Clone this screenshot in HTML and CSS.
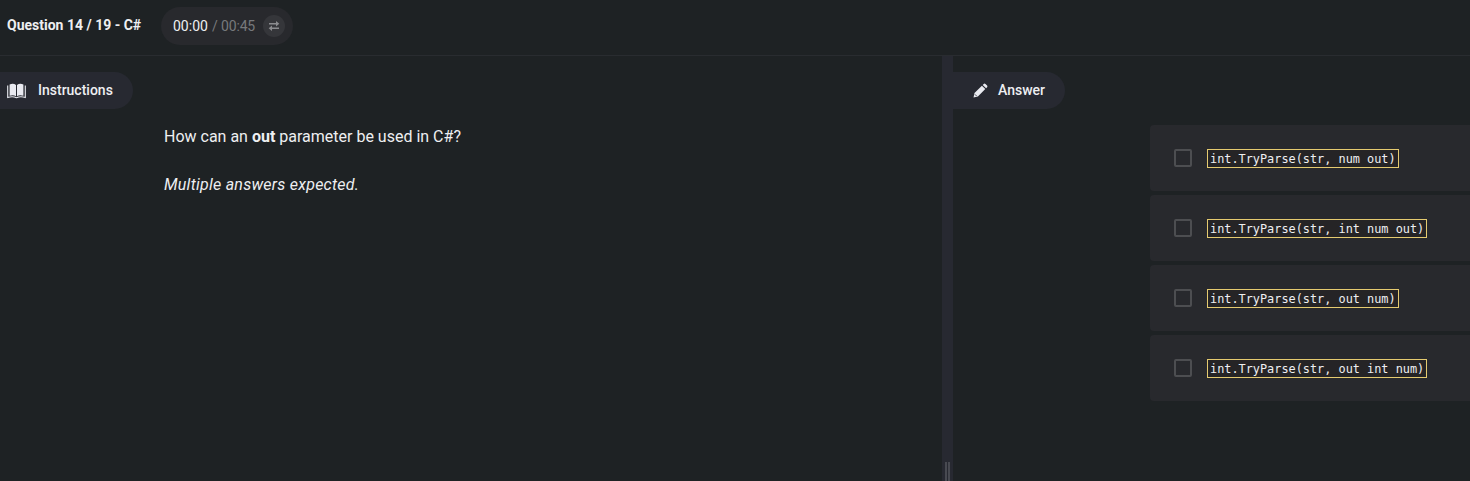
FILE: index.html
```html
<!DOCTYPE html>
<html lang="en">
<head>
<meta charset="utf-8">
<title>Question 14 / 19 - C#</title>
<link rel="stylesheet" href="styles.css">
</head>
<body>
<header class="topbar">
  <h1 class="title">Question 14 / 19 - C#</h1>
  <div class="timer">
    <span class="elapsed">00:00</span><span class="total">/ 00:45</span>
    <span class="swap"><svg width="12" height="12" viewBox="0 0 12 12"><path d="M1 3.7h8M3 8.3h8" stroke="currentColor" stroke-width="1.5"/><path d="M8 1l3.3 2.7L8 6.4zM4 5.6L.7 8.3 4 11z" fill="currentColor"/></svg></span>
  </div>
</header>
<main class="panes">
  <section class="pane">
    <h2 class="tab tab-instructions">
      <svg class="book" width="19" height="16" viewBox="0 0 19 16"><path d="M2.6 1.5C5 .3 7.2.5 9 2v11.2c-1.800-1.200-4-1.300-6.400-.4zM16.400 1.500C14 .3 11.800.5 10 2v11.200c1.800-1.200 4-1.300 6.400-.4z" fill="currentColor"/><path d="M.7 2.500v12c3.300-1 6.200-.9 8.800.2 2.600-1.100 5.500-1.200 8.800-.2v-12" fill="none" stroke="currentColor" stroke-width="1.100"/></svg>
      Instructions
    </h2>
    <div class="prompt">
      <p>How can an <strong>out</strong> parameter be used in C#?</p>
      <p><em>Multiple answers expected.</em></p>
    </div>
  </section>
  <div class="splitter"><span class="grip"></span></div>
  <section class="pane-answer">
    <h2 class="tab tab-answer">
      <svg class="pencil" width="15" height="15" viewBox="0 0 15 15"><path d="M.5 14.500l1-4.400L8.900 2.700l3.400 3.400-7.400 7.400zM9.700 1.900l1-1q.9-.7 1.800 0l1.600 1.600q.7.9 0 1.800l-1 1z" fill="currentColor"/><path d="M1.900 11.300l1.800 1.800" stroke="#272931" stroke-width=".8"/></svg>
      Answer
    </h2>
    <div class="options">
      <label class="option"><span class="check"></span><code>int.TryParse(str, num out)</code></label>
      <label class="option"><span class="check"></span><code>int.TryParse(str, int num out)</code></label>
      <label class="option"><span class="check"></span><code>int.TryParse(str, out num)</code></label>
      <label class="option"><span class="check"></span><code>int.TryParse(str, out int num)</code></label>
    </div>
  </section>
</main>
</body>
</html>
```
FILE: styles.css
```css
* { box-sizing: border-box; }
body {
  margin: 0;
  height: 481px;
  display: flex;
  flex-direction: column;
  overflow: hidden;
  background: #1e2224;
  color: #eeeff1;
  font-family: Roboto, sans-serif;
}
.topbar {
  display: flex;
  align-items: flex-start;
  height: 56px;
  padding: 7px 0 0 7px;
  border-bottom: 1px solid #292c30;
}
.title { margin: 0; width: 154px; font-size: 14px; font-weight: 700; line-height: 37px; white-space: nowrap; }
.timer {
  display: flex;
  align-items: center;
  width: 132px;
  height: 38px;
  padding-left: 12px;
  border-radius: 19px;
  background: #28292d;
  font-size: 14px;
}
.elapsed { width: 39px; }
.total { width: 51px; color: #77797c; letter-spacing: -0.15px; white-space: nowrap; }
.swap {
  display: flex;
  align-items: center;
  justify-content: center;
  width: 22px;
  height: 22px;
  border-radius: 50%;
  background: #35363a;
  color: #8b8c8f;
}
.panes { display: flex; flex: 1; }
.pane { width: 942px; padding-top: 16px; }
.pane-answer { flex: 1; padding-top: 16px; }
.tab {
  display: flex;
  align-items: center;
  height: 37px;
  margin: 0;
  padding-bottom: 2px;
  border-radius: 0 19px 19px 0;
  background: #272931;
  font-size: 14px;
  font-weight: 500;
}
.tab-instructions { width: 133px; padding-left: 7px; gap: 12px; }
.tab-answer { width: 112px; padding-left: 20px; gap: 10px; }
.book, .pencil { margin-top: 2px; color: #e9eaf0; }
.prompt { padding: 16px 0 0 164px; font-size: 16px; line-height: 24px; }
.prompt p { margin: 0 0 24px; }
.prompt em { letter-spacing: 0.25px; }
.splitter { display: flex; align-items: flex-end; justify-content: center; width: 11px; background: #272931; }
.grip { width: 5px; height: 19px; border: solid #484a51; border-width: 0 2px; }
.options { display: flex; flex-direction: column; gap: 4px; margin: 16px 0 0 197px; }
.option {
  display: flex;
  align-items: center;
  height: 66px;
  padding-left: 24px;
  border-radius: 4px 0 0 4px;
  background: #28292d;
}
.check { width: 18px; height: 18px; margin-right: 15px; border: 2px solid #4d4e51; border-radius: 2px; }
code {
  height: 19px;
  padding: 0 2px;
  border: 1px solid #e5cb70;
  background: #252426;
  font: 11.86px/18px "DejaVu Sans Mono", monospace;
  white-space: nowrap;
}
```
